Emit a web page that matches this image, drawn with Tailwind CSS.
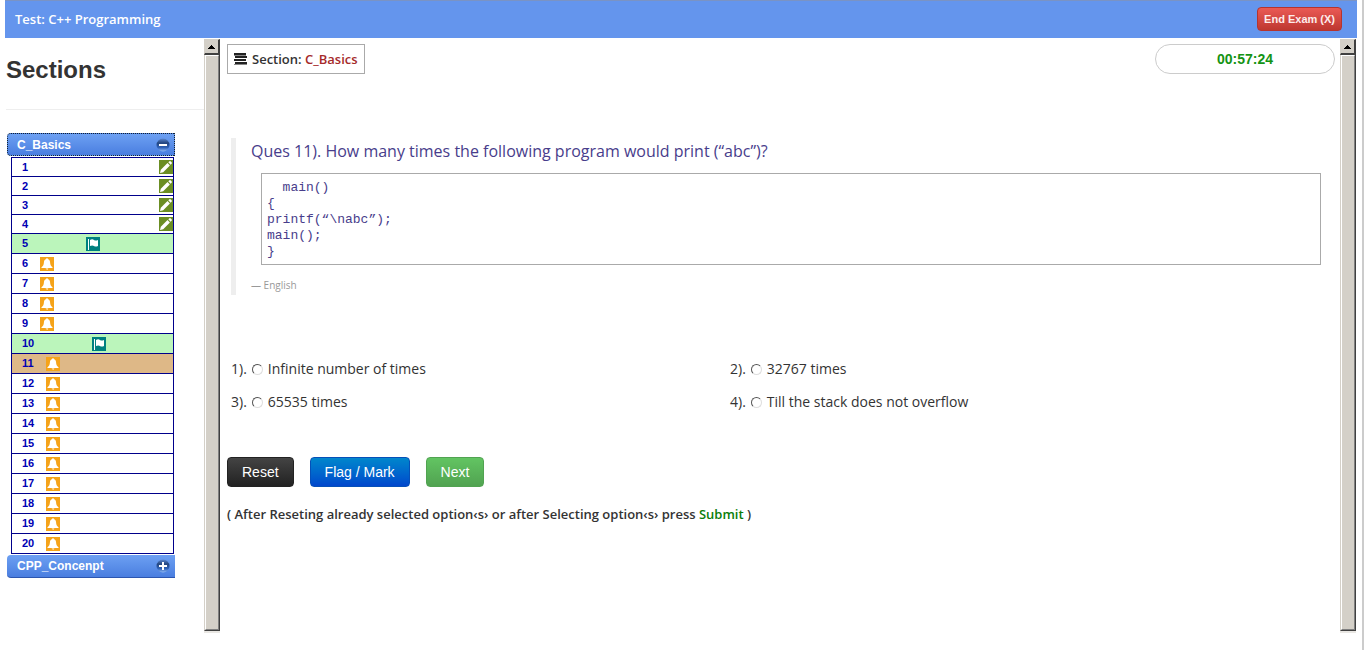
<!DOCTYPE html>
<html lang="en">
<head>
<meta charset="utf-8">
<title>Test: C++ Programming</title>
<script src="https://cdn.jsdelivr.net/npm/@tailwindcss/browser@4"></script>
</head>
<body class="bg-white font-['Open_Sans',sans-serif] text-[13px] text-[#333]">
<svg class="absolute size-0" aria-hidden="true">
  <linearGradient id="orb" x2="0" y2="1"><stop offset="0" stop-color="#5b87cf"/><stop offset=".35" stop-color="#23457f"/><stop offset=".7" stop-color="#2f62b8"/><stop offset="1" stop-color="#8fb8f5"/></linearGradient>
  <symbol id="pencil" viewBox="0 0 14 14"><path fill="#6b8e23" d="M0 0h14v14H0z"/><path fill="#fff" d="M1 13l.8-3.200L8.500 3.100l2.400 2.400-6.700 6.700zM9.300 2.300l1.100-1.100h1.200l1.200 1.200v1.200l-1.100 1.100z"/></symbol>
  <symbol id="flag" viewBox="0 0 14 14"><path fill="#008080" d="M0 0h14v14H0z"/><path fill="#fff" d="M2 2h1v11H2zM4 3c1.500-1 3-.8 4 0s2.300.8 4 0v6c-1.500.8-3 .8-4 0s-2.500-.8-4 0z"/></symbol>
  <symbol id="bell" viewBox="0 0 14 14"><path fill="#f5a31a" d="M0 0h14v14H0z"/><path fill="#fff" d="M6.300 1.200h1.400v.9c1.700.4 2.300 1.700 2.400 3.400.1 2.300.7 3.600 2.400 4.800v.7h-11v-.7c1.700-1.200 2.300-2.500 2.400-4.800.1-1.700.7-3 2.400-3.400zM5.700 11.500h2.600c-.2 1.600-2.400 1.600-2.600 0z"/></symbol>
</svg>

<div class="flex min-h-[650px] pl-[5px]">
  <div class="min-w-0 flex-1">
    <header class="flex h-[38px] items-center justify-between border-t border-[#7a93c4] bg-[#6495ed] pr-[15px] pb-[2px] pl-[10px]">
      <h1 class="pt-[2px] text-[13px] font-semibold text-white">Test: C++ Programming</h1>
      <button type="button" class="h-6 rounded border border-[#b5342f] bg-linear-to-b from-[#ea5a55] to-[#be3730] px-[6px] font-['Liberation_Sans',sans-serif] text-[11px] leading-4 font-bold text-[#fdeceb]">End Exam (X)</button>
    </header>

    <div class="flex pt-px">
      <aside class="w-[199px] shrink-0 font-['Liberation_Sans',sans-serif]">
        <h2 class="mb-[18px] ml-px border-b border-[#eee] pt-[11px] pb-[19px] text-[24px] leading-10 font-bold">Sections</h2>
        <nav class="mt-[23px] ml-[2px] w-[168px]">
          <button type="button" class="flex h-[23px] w-full items-center justify-between rounded-l border border-dotted border-[#123] bg-linear-to-b from-[#6da0f2] to-[#4a7ee0] pr-1 pl-[9px] text-[12px] font-bold text-white">C_Basics
            <svg class="size-[14px]" viewBox="0 0 14 14"><circle cx="7" cy="7" r="6.500" fill="url(#orb)"/><path fill="#fff" d="M3 6h8v2H3z"/></svg>
          </button>
          <ol class="mt-px ml-1 w-[163px] border border-[#00008b] text-[11px] font-bold text-[#0000b4] [&>li]:border-b [&>li]:border-[#00008b] [&>li:last-child]:border-b-0 [&_a]:flex [&_a]:items-center [&_a]:pl-[10px] [&_svg]:size-[14px]">
            <li><a href="#q1" class="h-[18px] justify-between">1<svg><use href="#pencil"/></svg></a></li>
            <li><a href="#q2" class="h-[18px] justify-between">2<svg><use href="#pencil"/></svg></a></li>
            <li><a href="#q3" class="h-[18px] justify-between">3<svg><use href="#pencil"/></svg></a></li>
            <li><a href="#q4" class="h-[18px] justify-between">4<svg><use href="#pencil"/></svg></a></li>
            <li><a href="#q5" class="h-[19px] gap-[58px] bg-[#bbf5bb]">5<svg><use href="#flag"/></svg></a></li>
            <li><a href="#q6" class="h-[19px] gap-3">6<svg><use href="#bell"/></svg></a></li>
            <li><a href="#q7" class="h-[19px] gap-3">7<svg><use href="#bell"/></svg></a></li>
            <li><a href="#q8" class="h-[19px] gap-3">8<svg><use href="#bell"/></svg></a></li>
            <li><a href="#q9" class="h-[19px] gap-3">9<svg><use href="#bell"/></svg></a></li>
            <li><a href="#q10" class="h-[19px] gap-[58px] bg-[#bbf5bb]">10<svg><use href="#flag"/></svg></a></li>
            <li><a href="#q11" class="h-[19px] gap-3 bg-[#deb887]">11<svg><use href="#bell"/></svg></a></li>
            <li><a href="#q12" class="h-[19px] gap-3">12<svg><use href="#bell"/></svg></a></li>
            <li><a href="#q13" class="h-[19px] gap-3">13<svg><use href="#bell"/></svg></a></li>
            <li><a href="#q14" class="h-[19px] gap-3">14<svg><use href="#bell"/></svg></a></li>
            <li><a href="#q15" class="h-[19px] gap-3">15<svg><use href="#bell"/></svg></a></li>
            <li><a href="#q16" class="h-[19px] gap-3">16<svg><use href="#bell"/></svg></a></li>
            <li><a href="#q17" class="h-[19px] gap-3">17<svg><use href="#bell"/></svg></a></li>
            <li><a href="#q18" class="h-[19px] gap-3">18<svg><use href="#bell"/></svg></a></li>
            <li><a href="#q19" class="h-[19px] gap-3">19<svg><use href="#bell"/></svg></a></li>
            <li><a href="#q20" class="h-[19px] gap-3">20<svg><use href="#bell"/></svg></a></li>
          </ol>
          <button type="button" class="mt-px flex h-[23px] w-full items-center justify-between rounded-l border-b border-[#2c56b0] bg-linear-to-b from-[#6da0f2] to-[#4a7ee0] pr-[5px] pl-[10px] text-[12px] font-bold text-white">CPP_Concenpt
            <svg class="size-[14px]" viewBox="0 0 14 14"><circle cx="7" cy="7" r="6.500" fill="url(#orb)"/><path fill="#fff" d="M3 6h3V3h2v3h3v2H8v3H6V8H3z"/></svg>
          </button>
        </nav>
      </aside>

      <div class="flex h-[594px] w-4 shrink-0 flex-col" aria-hidden="true">
        <div class="grid h-4 place-items-center border-t border-l border-r-2 border-b-2 border-t-[#d4d0c8] border-r-[#404040] border-b-[#404040] border-l-[#d4d0c8] bg-[#d4d0c8]"><svg class="h-1 w-[7px]" viewBox="0 0 7 4"><path d="M3 0h1v1h1v1h1v1h1v1H0V3h1V2h1V1h1z"/></svg></div>
        <div class="flex-1 border-l border-r border-b border-l-[#d4d0c8] border-r-[#404040] border-b-[#404040]"><div class="h-full border-t border-r border-b border-l border-t-white border-r-[#808080] border-b-[#808080] border-l-white bg-[#d4d0c8]"></div></div>
        <div class="h-[2px] bg-[#e9e7e3]"></div>
      </div>

      <main class="min-w-0 flex-1 pt-[5px] pr-[5px] pl-[7px]">
        <div class="flex items-start justify-between">
          <div class="flex h-[30px] items-center gap-[5px] border border-[#aaa] pr-[6px] pl-[6px] font-semibold">
            <svg class="h-3 w-[13px]" viewBox="0 0 13 12" shape-rendering="crispEdges"><path fill="#222" d="M0 0h12v2H0zM1 3h12v2H1zM0 6h12v2H0zM1 9h12v2H1z"/><path fill="#888" d="M0 2h12v1H0zM0 11h13v1H0z"/></svg>
            <p class="pt-px">Section: <span class="text-[#a52a2a]">C_Basics</span></p>
          </div>
          <div class="grid h-[30px] w-[180px] place-items-center rounded-full border border-[#ccc] font-['Liberation_Sans',sans-serif] text-[14px] font-bold text-[#149414]" role="timer">00:57:24</div>
        </div>

        <blockquote class="mt-16 ml-1 border-l-[5px] border-[#eee] pr-[14px] pl-[15px]">
          <p class="pt-[3px] text-[16px] leading-5 text-[#483d8b]">Ques 11). How many times the following program would print (“abc”)?</p>
          <pre class="mt-3 ml-[10px] border border-[#aaa] px-[5px] pt-[6px] pb-1 font-['Liberation_Mono',monospace] text-[13px] leading-4 text-[#483d8b]">  main()
{
printf(“\nabc”);
main();
}</pre>
          <footer class="mt-[10px] text-[10px] leading-5 text-[#999]">— English</footer>
        </blockquote>

        <form>
          <fieldset class="mt-16 ml-1 grid grid-cols-[499px_1fr] gap-y-[13px] text-[14px] leading-5">
            <label class="flex items-center gap-[5px]">1). <input type="radio" name="answer" class="size-[11px] appearance-none rounded-full border border-[#ddd] border-t-[#555] border-l-[#555] bg-white checked:bg-[#333]"> Infinite number of times</label>
            <label class="flex items-center gap-[5px]">2). <input type="radio" name="answer" class="size-[11px] appearance-none rounded-full border border-[#ddd] border-t-[#555] border-l-[#555] bg-white checked:bg-[#333]"> 32767 times</label>
            <label class="flex items-center gap-[5px]">3). <input type="radio" name="answer" class="size-[11px] appearance-none rounded-full border border-[#ddd] border-t-[#555] border-l-[#555] bg-white checked:bg-[#333]"> 65535 times</label>
            <label class="flex items-center gap-[5px]">4). <input type="radio" name="answer" class="size-[11px] appearance-none rounded-full border border-[#ddd] border-t-[#555] border-l-[#555] bg-white checked:bg-[#333]"> Till the stack does not overflow</label>
          </fieldset>
          <div class="mt-[45px] flex gap-4 font-['Liberation_Sans',sans-serif] text-[14px] text-white">
            <button type="reset" class="h-[30px] rounded border border-[#222] bg-linear-to-b from-[#444] to-[#222] px-[14px]">Reset</button>
            <button type="button" class="h-[30px] rounded border border-[#0550b8] bg-linear-to-b from-[#0486cc] to-[#0346cc] px-[14px]">Flag / Mark</button>
            <button type="button" class="h-[30px] rounded border border-[#51a351] bg-linear-to-b from-[#62c462] to-[#51a351] px-[14px]">Next</button>
          </div>
        </form>
        <p class="mt-[17px] leading-5 font-semibold">( After Reseting already selected option‹s› or after Selecting option‹s› press <span class="text-[#0a7d0a]">Submit</span> )</p>
      </main>

      <div class="mr-px flex h-[594px] w-4 shrink-0 flex-col" aria-hidden="true">
        <div class="grid h-4 place-items-center border-t border-l border-r-2 border-b-2 border-t-[#d4d0c8] border-r-[#404040] border-b-[#404040] border-l-[#d4d0c8] bg-[#d4d0c8]"><svg class="h-1 w-[7px]" viewBox="0 0 7 4"><path d="M3 0h1v1h1v1h1v1h1v1H0V3h1V2h1V1h1z"/></svg></div>
        <div class="flex-1 border-l border-r border-b border-l-[#d4d0c8] border-r-[#404040] border-b-[#404040]"><div class="h-full border-t border-r border-b border-l border-t-white border-r-[#808080] border-b-[#808080] border-l-white bg-[#d4d0c8]"></div></div>
        <div class="h-[2px] bg-[#e9e7e3]"></div>
      </div>
    </div>
  </div>
  <div class="mr-[2px] ml-[5px] w-[2px] bg-[#ccc]"></div>
</div>
</body>
</html>
